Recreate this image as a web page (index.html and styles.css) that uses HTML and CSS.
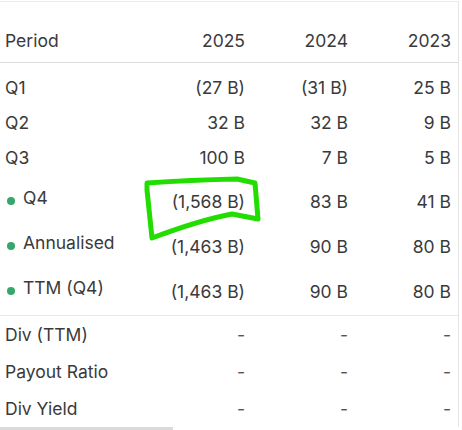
FILE: index.html
```html
<!DOCTYPE html>
<html lang="en">
<head>
  <meta charset="UTF-8">
  <meta name="viewport" content="width=device-width, initial-scale=1.0">
  <title>Earnings</title>
  <link rel="stylesheet" href="styles.css">
</head>
<body>
  <div class="panel">
    <div class="row head">
      <div class="label">Period</div>
      <div>2025</div>
      <div>2024</div>
      <div>2023</div>
    </div>

    <div class="section">
      <div class="row">
        <div class="label">Q1</div>
        <div>(27 B)</div>
        <div>(31 B)</div>
        <div>25 B</div>
      </div>
      <div class="row">
        <div class="label">Q2</div>
        <div>32 B</div>
        <div>32 B</div>
        <div>9 B</div>
      </div>
      <div class="row">
        <div class="label">Q3</div>
        <div>100 B</div>
        <div>7 B</div>
        <div>5 B</div>
      </div>
      <div class="row tall">
        <div class="label"><span class="dot"></span>Q4</div>
        <div>(1,568 B)</div>
        <div>83 B</div>
        <div>41 B</div>
      </div>
      <div class="row tall">
        <div class="label"><span class="dot"></span>Annualised</div>
        <div>(1,463 B)</div>
        <div>90 B</div>
        <div>80 B</div>
      </div>
      <div class="row tall">
        <div class="label"><span class="dot"></span>TTM (Q4)</div>
        <div>(1,463 B)</div>
        <div>90 B</div>
        <div>80 B</div>
      </div>
    </div>

    <div class="section div-rows">
      <div class="row">
        <div class="label">Div (TTM)</div>
        <div>-</div>
        <div>-</div>
        <div>-</div>
      </div>
      <div class="row">
        <div class="label">Payout Ratio</div>
        <div>-</div>
        <div>-</div>
        <div>-</div>
      </div>
      <div class="row">
        <div class="label">Div Yield</div>
        <div>-</div>
        <div>-</div>
        <div>-</div>
      </div>
    </div>

    <!-- hand drawn highlight round the Q4 figure -->
    <svg class="scribble" width="462" height="430" viewBox="0 0 462 430">
      <path d="M152 238 L147 190 L147 183 Q190 180 237 179 L255 183 L258 219 L232 214 Q200 220 152 238 Z"
            fill="none" stroke="#22dd00" stroke-width="5" stroke-linejoin="round" stroke-linecap="round"/>
    </svg>
  </div>
  <div class="scrollbar"></div>
</body>
</html>
```

FILE: styles.css
```css
body {
  margin: 0;
  padding: 0;
  background: #fff;
  color: #3a3a3a;
  font-family: Inter, "Open Sans", sans-serif;
  font-size: 17.5px;
}

.panel {
  position: relative;
  width: 458px;
  border-top: 1px solid #ececec;
  border-right: 1px solid #e4e4e4;
  margin-top: 1px;
}

.row {
  display: grid;
  grid-template-columns: 149px repeat(3, 103px);
  align-items: center;
  height: 35px;
}

.row > div {
  text-align: right;
  padding-right: 7px;
}

.row > .label {
  text-align: left;
  padding-left: 5px;
  display: flex;
  align-items: center;
}

.head {
  height: 60px;
  align-items: end;
  border-bottom: 1px solid #dcdcdc;
}

.head > div {
  padding-bottom: 11px;
}

.section {
  padding: 7px 0 5px;
  border-bottom: 1px solid #e8e8e8;
}

.tall {
  height: 45px;
}

.tall > div {
  margin-top: 8px;
}

.tall > .label {
  margin-top: 0;
}

.dot {
  width: 8px;
  height: 8px;
  border-radius: 50%;
  background: #34a86a;
  margin: 6px 8px 0 2px;
}

.div-rows {
  padding: 0;
  border-bottom: none;
}

.div-rows .row {
  height: 37px;
}

.div-rows .row > div {
  color: #555;
}

.div-rows .row > .label {
  color: #3a3a3a;
}

.scribble {
  position: absolute;
  top: -2px;
  left: 0;
  pointer-events: none;
}

.scrollbar {
  width: 173px;
  height: 4px;
  background: #dadada;
}
```
